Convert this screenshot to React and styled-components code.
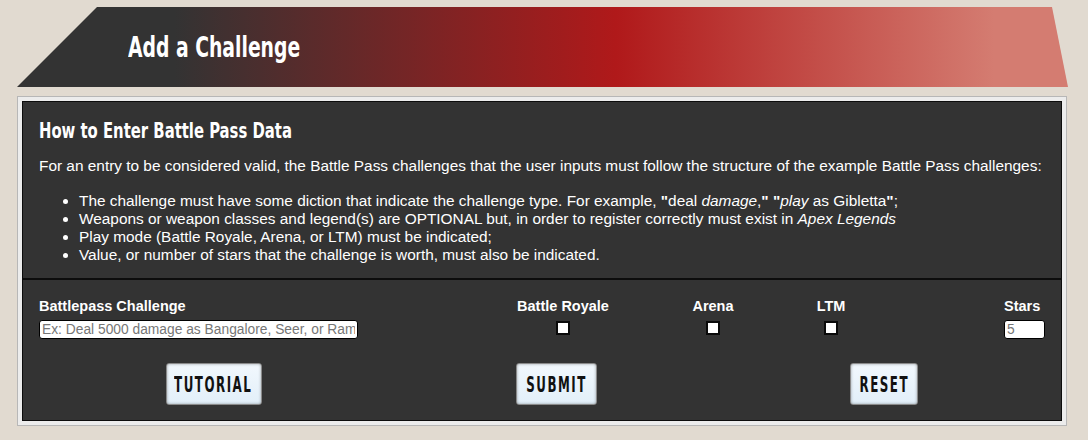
import React from 'react';
import styled, { createGlobalStyle, css } from 'styled-components';

const Global = createGlobalStyle`
  html, body { margin: 0; padding: 0; background: #e1dad0; }
  body { font-family: "Liberation Sans", Arial, sans-serif; }
  * { box-sizing: border-box; }
`;

const condensed = css`
  font-family: "DejaVu Sans Condensed", "DejaVu Sans", sans-serif;
  font-weight: bold;
  display: inline-block;
  transform-origin: left center;
  white-space: nowrap;
`;

const Page = styled.div`
  width: 1088px;
  height: 440px;
  overflow: hidden;
  padding: 7px 0 0 17px;
  display: flex;
  flex-direction: column;
  gap: 9px;
  & > * { flex-shrink: 0; }
`;

const Banner = styled.header`
  width: 1051px;
  height: 80px;
  display: flex;
  align-items: center;
  padding-left: 111px;
  background: linear-gradient(90deg, #333333 15%, #b0191a 57%, #d47c71 93%);
  clip-path: polygon(80px 0, calc(100% - 16px) 0, 100% 100%, 0 100%);
`;

const Title = styled.h1`
  ${condensed};
  margin: 0;
  color: #fff;
  font-size: 29px;
  transform: scaleX(0.72);
`;

const Panel = styled.section`
  width: 1050px;
  border: 1px solid #b7b7b7;
  background: #ececec;
  padding: 4px;
  display: flex;
  flex-direction: column;
`;

const Section = styled.div`
  background: #333333;
  border: 1px solid #0c0c0c;
  color: #fff;
  padding: ${(p) => p.$pad};
`;

const Heading = styled.h2`
  ${condensed};
  margin: 0 0 14px;
  font-size: 22px;
  color: #fff;
  transform: scaleX(0.75);
`;

const Para = styled.p`
  margin: 0 0 17px;
  font-size: 15.4px;
  line-height: 18px;
  white-space: nowrap;
`;

const List = styled.ul`
  margin: 0;
  padding-left: 40px;
  font-size: 15.4px;
  line-height: 18px;
  white-space: nowrap;
`;

const Fields = styled.div`
  display: grid;
  grid-template-columns: 440px 168px 132px 104px 1fr;
  align-items: start;
  padding-top: 1px;
`;

const Field = styled.label`
  display: flex;
  flex-direction: column;
  align-items: ${(p) => p.$align || 'center'};
  justify-self: ${(p) => p.$justify || 'stretch'};
  gap: 5px;
`;

const Label = styled.span`
  font-size: 14.5px;
  font-weight: bold;
  line-height: 17px;
  color: #fff;
`;

const TextInput = styled.input`
  width: ${(p) => p.$w}px;
  height: 19px;
  border: 1px solid #000;
  border-radius: 3px;
  background: #fff;
  padding: 0 2px;
  font-family: "Liberation Sans", Arial, sans-serif;
  font-size: 13.8px;
  outline: none;
  &::placeholder { color: #767676; }
`;

const Check = styled.input.attrs({ type: 'checkbox' })`
  appearance: none;
  width: 14px;
  height: 14px;
  margin: 1px 0 0;
  border: 2px solid #0a0a0a;
  background: #fff;
`;

const Buttons = styled.div`
  display: grid;
  grid-template-columns: 383px 302px 1fr;
  justify-items: center;
  margin: 24px -16px 0 -17px;
`;

const Button = styled.button`
  width: ${(p) => p.$w}px;
  height: 42px;
  border: 1px solid #8a8a8a;
  border-radius: 3px;
  background: linear-gradient(#f2f8fd, #e2eff9);
  box-shadow: inset 0 0 3px rgba(0,0,0,0.35);
  display: flex;
  align-items: center;
  justify-content: center;
  padding: 0;
  cursor: pointer;
`;

const ButtonText = styled.span`
  ${condensed};
  color: #111;
  font-size: 22px;
  letter-spacing: 2.5px;
  transform: scaleX(0.6);
  transform-origin: center center;
`;

export default function App() {
  return (
    <>
      <Global />
      <Page>
        <Banner>
          <Title>Add a Challenge</Title>
        </Banner>
        <Panel>
          <Section $pad="16px 16px 14px">
            <Heading>How to Enter Battle Pass Data</Heading>
            <Para>
              For an entry to be considered valid, the Battle Pass challenges that the user inputs must follow the structure of the example Battle Pass challenges:
            </Para>
            <List>
              <li>
                The challenge must have some diction that indicate the challenge type. For example, <b>"</b>deal <i>damage</i>,<b>"</b> <b>"</b><i>play</i> as Gibletta<b>"</b>;
              </li>
              <li>
                Weapons or weapon classes and legend(s) are OPTIONAL but, in order to register correctly must exist in <i>Apex Legends</i>
              </li>
              <li>Play mode (Battle Royale, Arena, or LTM) must be indicated;</li>
              <li>Value, or number of stars that the challenge is worth, must also be indicated.</li>
            </List>
          </Section>
          <Section $pad="17px 16px 15px">
            <Fields>
              <Field $align="flex-start">
                <Label>Battlepass Challenge</Label>
                <TextInput $w={319} placeholder="Ex: Deal 5000 damage as Bangalore, Seer, or Rampart" />
              </Field>
              <Field>
                <Label>Battle Royale</Label>
                <Check />
              </Field>
              <Field>
                <Label>Arena</Label>
                <Check />
              </Field>
              <Field>
                <Label>LTM</Label>
                <Check />
              </Field>
              <Field $align="flex-start" $justify="end">
                <Label>Stars</Label>
                <TextInput $w={41} placeholder="5" />
              </Field>
            </Fields>
            <Buttons>
              <Button $w={96}><ButtonText>TUTORIAL</ButtonText></Button>
              <Button $w={81}><ButtonText>SUBMIT</ButtonText></Button>
              <Button $w={68}><ButtonText>RESET</ButtonText></Button>
            </Buttons>
          </Section>
        </Panel>
      </Page>
    </>
  );
}
